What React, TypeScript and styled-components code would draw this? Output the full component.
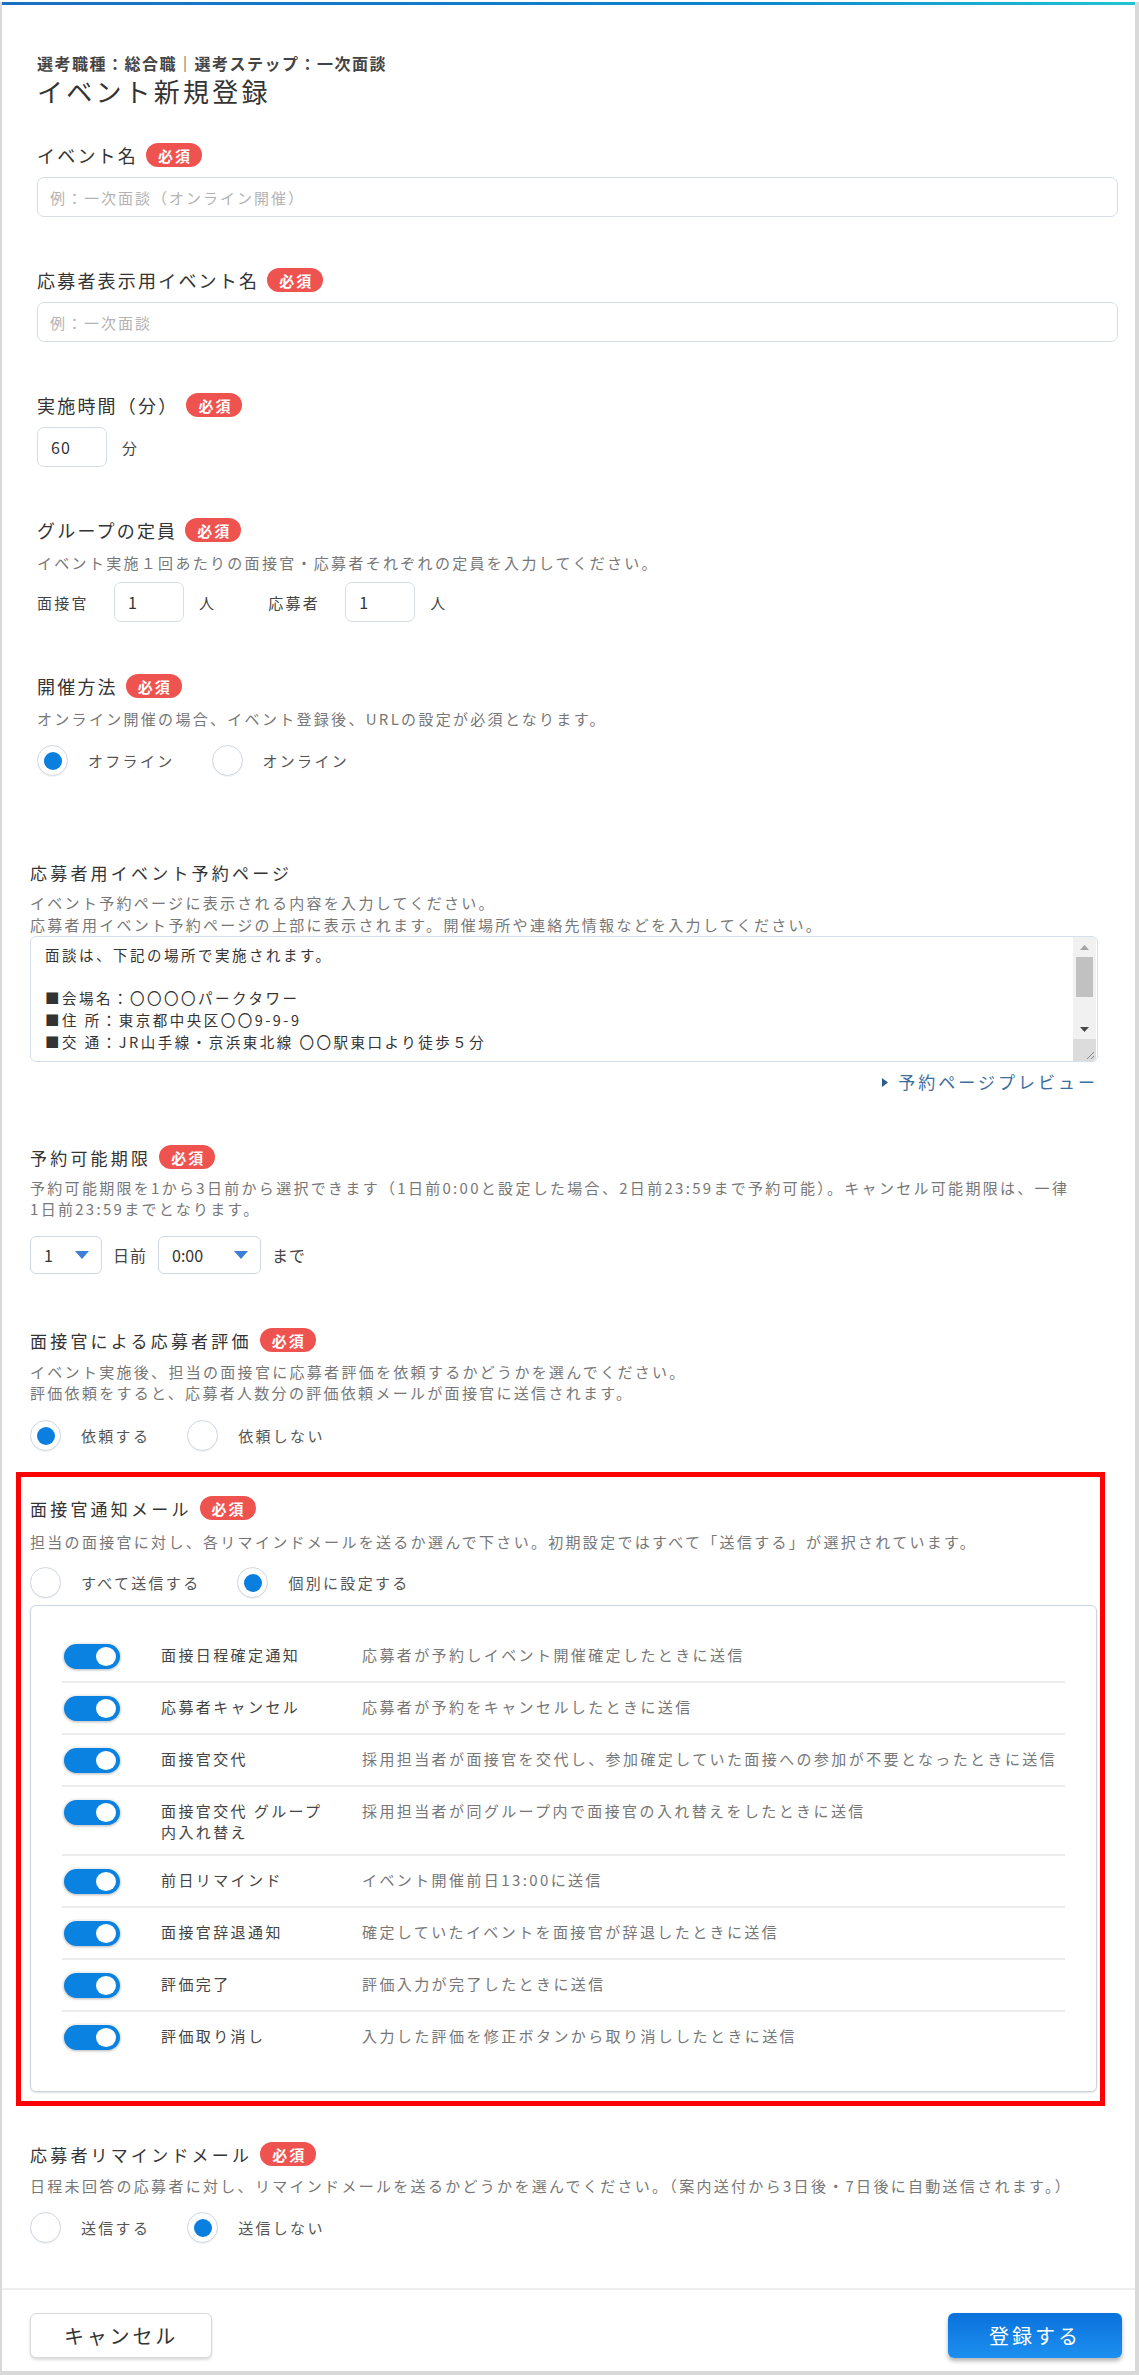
import styled, { createGlobalStyle } from 'styled-components';

const notices = [
  { name: '面接日程確定通知', desc: '応募者が予約しイベント開催確定したときに送信' },
  { name: '応募者キャンセル', desc: '応募者が予約をキャンセルしたときに送信' },
  { name: '面接官交代', desc: '採用担当者が面接官を交代し、参加確定していた面接への参加が不要となったときに送信' },
  { name: '面接官交代 グループ内入れ替え', desc: '採用担当者が同グループ内で面接官の入れ替えをしたときに送信' },
  { name: '前日リマインド', desc: 'イベント開催前日13:00に送信' },
  { name: '面接官辞退通知', desc: '確定していたイベントを面接官が辞退したときに送信' },
  { name: '評価完了', desc: '評価入力が完了したときに送信' },
  { name: '評価取り消し', desc: '入力した評価を修正ボタンから取り消ししたときに送信' },
];

const pageText =
  '面談は、下記の場所で実施されます。\n\n■会場名：〇〇〇〇パークタワー\n■住 所：東京都中央区〇〇9-9-9\n■交 通：JR山手線・京浜東北線 〇〇駅東口より徒歩５分';

const Caret = () => (
  <svg width="14" height="8" viewBox="0 0 14 8">
    <path d="M0 0H14L7 8Z" fill="#3b7fd9" />
  </svg>
);

const App = () => (
  <>
    <GlobalStyle />
    <Page>
      <TopBar />
      <TopArea>
        <Crumb>選考職種：総合職｜選考ステップ：一次面談</Crumb>
        <Title>イベント新規登録</Title>

        <Field $top={34}>
          <Label>
            イベント名<Badge>必須</Badge>
          </Label>
          <TextInput placeholder="例：一次面談（オンライン開催）" />
        </Field>

        <Field $top={50}>
          <Label>
            応募者表示用イベント名<Badge>必須</Badge>
          </Label>
          <TextInput placeholder="例：一次面談" />
        </Field>

        <Field $top={50}>
          <Label>
            実施時間（分）<Badge>必須</Badge>
          </Label>
          <InlineRow $top={9}>
            <SmallInput defaultValue="60" />
            <Unit>分</Unit>
          </InlineRow>
        </Field>

        <Field $top={50}>
          <Label>
            グループの定員<Badge>必須</Badge>
          </Label>
          <Desc $top={9}>イベント実施１回あたりの面接官・応募者それぞれの定員を入力してください。</Desc>
          <InlineRow $top={8}>
            <InlineLabel>面接官</InlineLabel>
            <SmallInput defaultValue="1" />
            <Unit>人</Unit>
            <InlineLabel $lead>応募者</InlineLabel>
            <SmallInput defaultValue="1" />
            <Unit>人</Unit>
          </InlineRow>
        </Field>

        <Field $top={51}>
          <Label>
            開催方法<Badge>必須</Badge>
          </Label>
          <Desc $top={9}>オンライン開催の場合、イベント登録後、URLの設定が必須となります。</Desc>
          <RadioGroup $top={15}>
            <RadioOption>
              <RadioMark $on />
              オフライン
            </RadioOption>
            <RadioOption>
              <RadioMark />
              オンライン
            </RadioOption>
          </RadioGroup>
        </Field>
      </TopArea>

      <BottomArea>
        <Field $top={83}>
          <Label $size="md">応募者用イベント予約ページ</Label>
          <Desc $top={7}>
            イベント予約ページに表示される内容を入力してください。
            <br />
            応募者用イベント予約ページの上部に表示されます。開催場所や連絡先情報などを入力してください。
          </Desc>
          <TextBox>
            <TextBody>{pageText}</TextBody>
            <Scroll>
              <ScrollArrow>
                <svg width="9" height="5" viewBox="0 0 9 5">
                  <path d="M0 5L4.5 0L9 5Z" fill="#a3a3a3" />
                </svg>
              </ScrollArrow>
              <ScrollThumb />
              <ScrollSpacer />
              <ScrollArrow>
                <svg width="9" height="5" viewBox="0 0 9 5">
                  <path d="M0 0H9L4.5 5Z" fill="#4a4a4a" />
                </svg>
              </ScrollArrow>
              <ResizeCorner>
                <svg width="10" height="10" viewBox="0 0 10 10">
                  <path d="M9 2L2 9M9 6L6 9" stroke="#8a8a8a" strokeWidth="1" />
                </svg>
              </ResizeCorner>
            </Scroll>
          </TextBox>
          <PreviewLink href="#preview">
            <svg width="6" height="9" viewBox="0 0 6 9">
              <path d="M0 0L6 4.5L0 9Z" fill="#2d5d8a" />
            </svg>
            予約ページプレビュー
          </PreviewLink>
        </Field>

        <Field $top={51}>
          <Label $size="md">
            予約可能期限<Badge>必須</Badge>
          </Label>
          <Desc $top={7} $lh={21}>
            予約可能期限を1から3日前から選択できます（1日前0:00と設定した場合、2日前23:59まで予約可能）。キャンセル可能期限は、一律
            <br />
            1日前23:59までとなります。
          </Desc>
          <SelectRow>
            <Select $w={72}>
              1<Caret />
            </Select>
            <Unit $tight>日前</Unit>
            <Select $w={103}>
              0:00<Caret />
            </Select>
            <Unit $tight>まで</Unit>
          </SelectRow>
        </Field>

        <Field $top={53}>
          <Label $size="md">
            面接官による応募者評価<Badge>必須</Badge>
          </Label>
          <Desc $top={8} $lh={21}>
            イベント実施後、担当の面接官に応募者評価を依頼するかどうかを選んでください。
            <br />
            評価依頼をすると、応募者人数分の評価依頼メールが面接官に送信されます。
          </Desc>
          <RadioGroup $top={17}>
            <RadioOption>
              <RadioMark $on />
              依頼する
            </RadioOption>
            <RadioOption>
              <RadioMark />
              依頼しない
            </RadioOption>
          </RadioGroup>
        </Field>

        <Highlight>
          <Label $size="md">
            面接官通知メール<Badge>必須</Badge>
          </Label>
          <Desc $top={10}>
            担当の面接官に対し、各リマインドメールを送るか選んで下さい。初期設定ではすべて「送信する」が選択されています。
          </Desc>
          <RadioGroup $top={14}>
            <RadioOption>
              <RadioMark />
              すべて送信する
            </RadioOption>
            <RadioOption>
              <RadioMark $on />
              個別に設定する
            </RadioOption>
          </RadioGroup>
          <NoticePanel>
            <NoticeList>
              {notices.map((n) => (
                <NoticeRow key={n.name}>
                  <Switch role="switch" aria-checked="true" />
                  <NoticeName>{n.name}</NoticeName>
                  <NoticeDesc>{n.desc}</NoticeDesc>
                </NoticeRow>
              ))}
            </NoticeList>
          </NoticePanel>
        </Highlight>

        <Field $top={35}>
          <Label $size="md">
            応募者リマインドメール<Badge>必須</Badge>
          </Label>
          <Desc $top={8}>
            日程未回答の応募者に対し、リマインドメールを送るかどうかを選んでください。（案内送付から3日後・7日後に自動送信されます。）
          </Desc>
          <RadioGroup $top={15}>
            <RadioOption>
              <RadioMark />
              送信する
            </RadioOption>
            <RadioOption>
              <RadioMark $on />
              送信しない
            </RadioOption>
          </RadioGroup>
        </Field>
      </BottomArea>

      <Footer>
        <CancelButton>キャンセル</CancelButton>
        <SubmitButton>登録する</SubmitButton>
      </Footer>
    </Page>
  </>
);

const GlobalStyle = createGlobalStyle`
  html, body {
    margin: 0;
    padding: 0;
    background: #fff;
  }
  body {
    font-family: "Noto Sans CJK JP", "Noto Sans", sans-serif;
    color: #333;
  }
  * {
    box-sizing: border-box;
  }
`;

const Page = styled.div`
  width: 1139px;
  background: #fff;
  border-left: 2px solid #d9d9d9;
  border-right: 4px solid #d9d9d9;
  border-bottom: 5px solid #d9d9d9;
`;

const TopBar = styled.div`
  height: 3px;
  margin-top: 2px;
  background: linear-gradient(90deg, #1a6fc4 0%, #0b84cf 65%, #22c3d3 100%);
`;

const TopArea = styled.div`
  padding: 0 17px 0 35px;
`;

const BottomArea = styled.div`
  padding: 0 37px 45px 28px;
`;

const Crumb = styled.div`
  margin-top: 47px;
  font-size: 16px;
  line-height: 22px;
  font-weight: 700;
  letter-spacing: 1.5px;
  color: #444;
`;

const Title = styled.h1`
  margin: 0;
  font-size: 26px;
  line-height: 34px;
  font-weight: 400;
  letter-spacing: 3.2px;
  color: #333;
`;

const Field = styled.section<{ $top: number }>`
  margin-top: ${(p) => p.$top}px;
`;

const Label = styled.div<{ $size?: 'lg' | 'md' }>`
  display: flex;
  align-items: center;
  gap: 8px;
  height: 26px;
  font-size: ${(p) => (p.$size === 'md' ? '17px' : '18px')};
  letter-spacing: ${(p) => (p.$size === 'md' ? '3.2px' : '2.2px')};
  color: #333;
  white-space: nowrap;
`;

const Badge = styled.span`
  display: inline-flex;
  align-items: center;
  justify-content: center;
  height: 24px;
  padding: 0 10px 0 12px;
  border-radius: 12px;
  background: #ef5350;
  color: #fff;
  font-size: 15px;
  font-weight: 700;
  letter-spacing: 2px;
`;

const Desc = styled.p<{ $top: number; $lh?: number }>`
  margin: ${(p) => p.$top}px 0 0;
  font-size: 15px;
  line-height: ${(p) => p.$lh ?? 22}px;
  letter-spacing: 2.3px;
  color: #777;
  white-space: nowrap;
`;

const TextInput = styled.input`
  display: block;
  width: 100%;
  height: 40px;
  margin-top: 9px;
  padding: 0 12px;
  border: 1.5px solid #d5dee7;
  border-radius: 7px;
  background: #fff;
  font: inherit;
  font-size: 15px;
  letter-spacing: 2px;
  color: #333;
  outline: none;

  &::placeholder {
    color: #b3b3b3;
  }
`;

const SmallInput = styled(TextInput)`
  width: 70px;
  margin-top: 0;
  padding: 0 13px;
  font-size: 16px;
  letter-spacing: 1px;
`;

const InlineRow = styled.div<{ $top: number }>`
  display: flex;
  align-items: center;
  margin-top: ${(p) => p.$top}px;
`;

const InlineLabel = styled.span<{ $lead?: boolean }>`
  margin-left: ${(p) => (p.$lead ? '52px' : '0')};
  margin-right: 25px;
  font-size: 15px;
  letter-spacing: 2.3px;
  color: #444;
`;

const Unit = styled.span<{ $tight?: boolean }>`
  margin: ${(p) => (p.$tight ? '0 11px' : '0 0 0 15px')};
  font-size: ${(p) => (p.$tight ? '16px' : '15px')};
  letter-spacing: ${(p) => (p.$tight ? '1px' : '2.3px')};
  color: #444;
`;

const RadioGroup = styled.div<{ $top: number }>`
  display: flex;
  gap: 37px;
  margin-top: ${(p) => p.$top}px;
`;

const RadioOption = styled.label`
  display: flex;
  align-items: center;
  gap: 20px;
  font-size: 15px;
  letter-spacing: 2.3px;
  color: #555;
`;

const RadioMark = styled.span<{ $on?: boolean }>`
  display: flex;
  align-items: center;
  justify-content: center;
  width: 31px;
  height: 31px;
  border-radius: 50%;
  border: 1.5px solid #cfd8e0;
  background: #fff;
  box-shadow: 0 1px 1px rgba(0, 0, 0, 0.05);

  &::after {
    content: '';
    width: 18px;
    height: 18px;
    border-radius: 50%;
    background: ${(p) => (p.$on ? '#0a7fe0' : 'transparent')};
  }
`;

const TextBox = styled.div`
  display: flex;
  height: 126px;
  border: 1.5px solid #d6e0ea;
  border-radius: 6px;
  overflow: hidden;
  background: #fff;
`;

const TextBody = styled.div`
  flex: 1;
  padding: 7px 14px;
  overflow: hidden;
  white-space: pre-line;
  font-size: 14.5px;
  line-height: 21.7px;
  letter-spacing: 2.5px;
  color: #333;
`;

const Scroll = styled.div`
  display: flex;
  flex-direction: column;
  width: 23px;
  margin-right: 1px;
  background: #f1f1f1;
`;

const ScrollArrow = styled.div`
  display: flex;
  align-items: center;
  justify-content: center;
  height: 20px;
`;

const ScrollThumb = styled.div`
  height: 40px;
  margin: 0 3px;
  background: #c1c1c1;
`;

const ScrollSpacer = styled.div`
  flex: 1;
`;

const ResizeCorner = styled.div`
  display: flex;
  align-items: flex-end;
  justify-content: flex-end;
  height: 22px;
  padding: 1px;
  background: #dcdcdc;
`;

const PreviewLink = styled.a`
  display: flex;
  align-items: center;
  justify-content: flex-end;
  gap: 10px;
  margin-top: 9px;
  font-size: 17px;
  line-height: 22px;
  letter-spacing: 3px;
  color: #3b6e9c;
  text-decoration: none;
`;

const SelectRow = styled.div`
  display: flex;
  align-items: center;
  margin-top: 17px;
`;

const Select = styled.div<{ $w: number }>`
  display: flex;
  align-items: center;
  justify-content: space-between;
  width: ${(p) => p.$w}px;
  height: 38px;
  padding: 0 12px 0 13px;
  border: 1.5px solid #cfd9e3;
  border-radius: 6px;
  font-size: 16px;
  color: #333;
`;

const Highlight = styled.div`
  margin: 21px -7px 0 -14px;
  padding: 18px 3px 9px 9px;
  border: 5px solid #ff0000;
`;

const NoticePanel = styled.div`
  margin-top: 7px;
  padding: 25px 31px 29px;
  border: 1.5px solid #c9d6e0;
  border-radius: 6px;
  box-shadow: 0 1px 2px rgba(0, 0, 0, 0.12);
  background: #fff;
`;

const NoticeList = styled.ul`
  margin: 0;
  padding: 0;
  list-style: none;
`;

const NoticeRow = styled.li`
  display: flex;
  align-items: flex-start;
  padding: 13px 0 12px 2px;
  border-bottom: 2px solid #ececec;

  &:last-child {
    border-bottom: none;
  }
`;

const Switch = styled.span`
  position: relative;
  flex: none;
  width: 56px;
  height: 25px;
  border-radius: 13px;
  background: #0a82e2;
  box-shadow: 0 0 0 2px rgba(0, 0, 0, 0.04), 0 1px 3px rgba(0, 0, 0, 0.22);

  &::after {
    content: '';
    position: absolute;
    top: 3px;
    right: 4px;
    width: 20px;
    height: 19px;
    border-radius: 50%;
    background: #fff;
  }
`;

const NoticeName = styled.div`
  width: 172px;
  margin-left: 41px;
  font-size: 15px;
  line-height: 21px;
  letter-spacing: 2.4px;
  color: #444;
`;

const NoticeDesc = styled.div`
  margin-left: 29px;
  font-size: 15px;
  line-height: 21px;
  letter-spacing: 2.4px;
  color: #777;
  white-space: nowrap;
`;

const Footer = styled.footer`
  display: flex;
  justify-content: space-between;
  padding: 23px 13px 13px 28px;
  border-top: 2px solid #eeeeee;
`;

const CancelButton = styled.button`
  width: 182px;
  height: 45px;
  border: 1px solid #d9d9d9;
  border-radius: 6px;
  background: #fff;
  box-shadow: 0 2px 3px rgba(0, 0, 0, 0.14);
  font: inherit;
  font-size: 20px;
  letter-spacing: 2.8px;
  color: #333;
`;

const SubmitButton = styled.button`
  width: 174px;
  height: 45px;
  border: none;
  border-radius: 6px;
  background: linear-gradient(180deg, #0a72dc 0%, #1c8ff0 100%);
  box-shadow: 0 3px 4px rgba(0, 0, 0, 0.3);
  font: inherit;
  font-size: 20px;
  letter-spacing: 3px;
  color: #fff;
`;

export default App;
